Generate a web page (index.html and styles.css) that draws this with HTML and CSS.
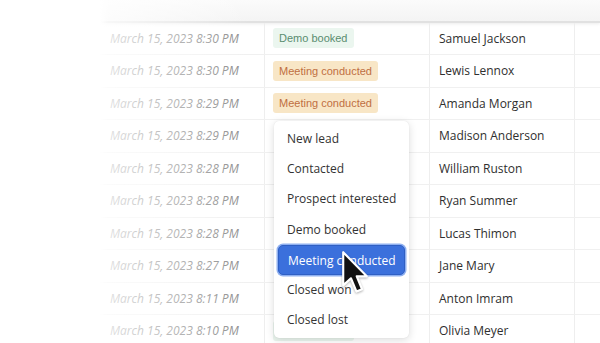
FILE: index.html
```html
<!DOCTYPE html>
<html>
<head>
    <link rel="stylesheet" href="styles.css">
</head>
<body>
<div class="page">
    <div class="table">
        <div class="thead"></div>

        <div class="row">
            <div class="cell date">March 15, 2023 8:30 PM</div>
            <div class="cell status"><span class="badge badge-demo">Demo booked</span></div>
            <div class="cell name">Samuel Jackson</div>
            <div class="cell extra"></div>
        </div>
        <div class="row">
            <div class="cell date">March 15, 2023 8:30 PM</div>
            <div class="cell status"><span class="badge badge-meeting">Meeting conducted</span></div>
            <div class="cell name">Lewis Lennox</div>
            <div class="cell extra"></div>
        </div>
        <div class="row">
            <div class="cell date">March 15, 2023 8:29 PM</div>
            <div class="cell status"><span class="badge badge-meeting">Meeting conducted</span></div>
            <div class="cell name">Amanda Morgan</div>
            <div class="cell extra"></div>
        </div>
        <div class="row">
            <div class="cell date">March 15, 2023 8:29 PM</div>
            <div class="cell status"></div>
            <div class="cell name">Madison Anderson</div>
            <div class="cell extra"></div>
        </div>
        <div class="row">
            <div class="cell date">March 15, 2023 8:28 PM</div>
            <div class="cell status"></div>
            <div class="cell name">William Ruston</div>
            <div class="cell extra"></div>
        </div>
        <div class="row">
            <div class="cell date">March 15, 2023 8:28 PM</div>
            <div class="cell status"></div>
            <div class="cell name">Ryan Summer</div>
            <div class="cell extra"></div>
        </div>
        <div class="row">
            <div class="cell date">March 15, 2023 8:28 PM</div>
            <div class="cell status"></div>
            <div class="cell name">Lucas Thimon</div>
            <div class="cell extra"></div>
        </div>
        <div class="row">
            <div class="cell date">March 15, 2023 8:27 PM</div>
            <div class="cell status"></div>
            <div class="cell name">Jane Mary</div>
            <div class="cell extra"></div>
        </div>
        <div class="row">
            <div class="cell date">March 15, 2023 8:11 PM</div>
            <div class="cell status"></div>
            <div class="cell name">Anton Imram</div>
            <div class="cell extra"></div>
        </div>
        <div class="row">
            <div class="cell date">March 15, 2023 8:10 PM</div>
            <div class="cell status"><span class="badge badge-demo">Demo booked</span></div>
            <div class="cell name">Olivia Meyer</div>
            <div class="cell extra"></div>
        </div>
    </div>

    <!-- white fade over the left side of the table -->
    <div class="fade"></div>

    <!-- status dropdown -->
    <div class="menu">
        <div class="menu-item">New lead</div>
        <div class="menu-item">Contacted</div>
        <div class="menu-item">Prospect interested</div>
        <div class="menu-item">Demo booked</div>
        <div class="menu-item active">Meeting conducted</div>
        <div class="menu-item">Closed won</div>
        <div class="menu-item">Closed lost</div>
    </div>

    <svg class="cursor" width="28" height="45" viewBox="0 0 13 21">
        <path d="M1 1 L1 16.5 L4.6 13.2 L7.2 19.4 L9.8 18.3 L7.3 12.3 L12 12.3 Z"
              fill="#111" stroke="#fff" stroke-width="1" stroke-linejoin="round"/>
    </svg>
</div>
</body>
</html>
```

FILE: styles.css
```css
* {
    margin: 0;
    padding: 0;
    box-sizing: border-box;
}

body {
    width: 600px;
    height: 343px;
    overflow: hidden;
    background: white;
    font-family: 'Open Sans', 'Noto Sans', sans-serif;
}

.page {
    position: relative;
    width: 600px;
    height: 343px;
    overflow: hidden;
}

.table {
    margin-left: 100px;
}

.thead {
    height: 22.5px;
    background: linear-gradient(#fbfbfb, #f4f4f4);
    border-bottom: 2px solid #e1e1e1;
    box-shadow: 0 1px 3px rgba(0, 0, 0, 0.08);
}

.row {
    display: grid;
    grid-template-columns: 165px 165px 145px 1fr;
    height: 32.5px;
    border-bottom: 1px solid #f0f0f0;
}

.cell {
    display: flex;
    align-items: center;
    border-right: 1px solid #eeeeee;
}

.cell.extra {
    border-right: none;
}

.date {
    padding-left: 10px;
    font-size: 12px;
    font-style: italic;
    color: #8a8a8a;
}

.status {
    padding-left: 8px;
}

.name {
    padding-left: 9px;
    font-size: 12px;
    color: #2f2f2f;
}

.badge {
    display: inline-block;
    height: 20px;
    line-height: 20px;
    padding: 0 6px;
    border-radius: 3px;
    font-family: 'Liberation Sans', Arial, sans-serif;
    font-size: 11px;
}

.badge-demo {
    background: #ebf6ef;
    color: #5a8d70;
}

.badge-meeting {
    background: #f8e6c6;
    color: #bf6f42;
}

.fade {
    position: absolute;
    top: 0;
    left: 0;
    width: 270px;
    height: 343px;
    background: linear-gradient(to right, #fff 0, #fff 100px, rgba(255, 255, 255, 0.75) 108px, rgba(255, 255, 255, 0) 250px);
}

/* Dropdown */
.menu {
    position: absolute;
    left: 274px;
    top: 121px;
    width: 135px;
    padding: 3px 4px;
    background: white;
    border-radius: 5px;
    box-shadow: 0 2px 8px rgba(0, 0, 0, 0.14), 0 0 1px rgba(0, 0, 0, 0.12);
}

.menu-item {
    height: 30.2px;
    line-height: 30px;
    padding-left: 9px;
    font-size: 12px;
    color: #333;
    border-radius: 5px;
    white-space: nowrap;
}

.menu-item.active {
    background: #3b70dc;
    color: white;
    box-shadow: 0 0 0 1.5px #8fb0f0;
    border: 1px solid #2f5fc4;
}

.cursor {
    position: absolute;
    left: 341px;
    top: 250px;
    filter: drop-shadow(0 1px 1px rgba(0, 0, 0, 0.3));
}
```
